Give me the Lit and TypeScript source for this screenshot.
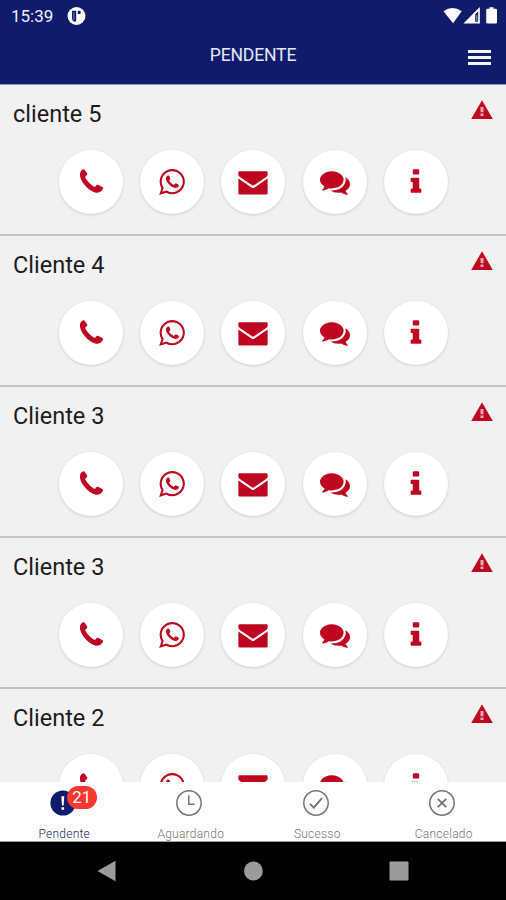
import { LitElement, html, css, svg } from "lit";
import { customElement, property } from "lit/decorators.js";

const ICONS: Record<string, string> = {
  phone:
    "M436 137Q500 130 540 200L665 395Q690 450 645 490L560 560Q540 590 560 640Q650 800 795 957Q940 1100 1085 1175Q1135 1195 1160 1160L1215 1085Q1250 1040 1310 1060L1570 1195Q1640 1235 1615 1290Q1580 1390 1500 1450Q1400 1550 1195 1535Q900 1480 640 1215Q300 870 239 538Q220 350 281 257Q340 165 436 137Z",
  whatsapp:
    "M1113 974q13 0 97.5 44t89.5 53q2 5 2 15 0 33-17 76-16 39-71 65.5t-102 26.5q-57 0-190-62-98-45-170-118t-148-185q-72-107-71-194v-8q3-91 74-158 24-22 52-22 6 0 18 1.5t19 1.5q19 0 26.5 6.5t15.5 27.5q8 20 33 88t25 75q0 21-34.5 57.5t-34.5 46.5q0 7 5 15 34 73 102 137 56 53 151 101 12 7 22 7 15 0 54-48.5t52-48.5zm-203 530q127 0 243.5-50t200.5-134 134-200.5 50-243.5-50-243.5-134-200.5-200.5-134-243.5-50-243.5 50-200.5 134-134 200.5-50 243.5q0 203 120 368l-79 233 242-77q158 104 345 104zm0-1382q153 0 292.5 60t240.5 161 161 240.5 60 292.5-60 292.5-161 240.5-240.5 161-292.5 60q-195 0-365-94l-417 134 136-405q-108-178-108-389 0-153 60-292.5t161-240.5 240.5-161 292.5-60z",
  mail:
    "M90 256H1702Q1770 256 1770 324V490Q1740 560 1660 612L960 1096Q896 1140 832 1096L132 612Q52 560 22 490V324Q22 256 90 256ZM22 690L810 1230Q896 1290 982 1230L1770 690V1570Q1770 1650 1690 1650H102Q22 1650 22 1570Z",
  chat:
    "M1408 768q0 139-94 257t-256.5 186.5-353.5 68.5q-86 0-176-16-124 88-278 128-36 9-86 16h-3q-11 0-20.5-8t-11.5-21q-1-3-1-6.5t.5-6.5 2-6l2.5-5 3.5-5.5 4-5 4.5-5 4-4.5q5-6 23-25t26-29.5 22.5-29 25-38.5 20.5-44q-124-72-195-177t-71-224q0-139 94-257t256.5-186.5 353.5-68.5 353.5 68.5 256.5 186.5 94 257zm384 256q0 120-71 224.5t-195 176.5q10 24 20.5 44t25 38.5 22.5 29 26 29.5 23 25q1 1 4 4.5t4.5 5 4 5 3.5 5.5l2.5 5 2 6 .5 6.5-1 6.5q-3 14-13 22t-22 7q-50-7-86-16-154-40-278-128-90 16-176 16-271 0-472-132 58 4 88 4 161 0 309-45t264-129q125-92 192-212t67-254q0-77-23-152 129 71 204 178t75 230z",
  info:
    "M1216 1344v128q0 26-19 45t-45 19h-512q-26 0-45-19t-19-45v-128q0-26 19-45t45-19h64v-384h-64q-26 0-45-19t-19-45v-128q0-26 19-45t45-19h384q26 0 45 19t19 45v576h64q26 0 45 19t19 45zm-128-1152v192q0 26-19 45t-45 19h-256q-26 0-45-19t-19-45v-192q0-26 19-45t45-19h256q26 0 45 19t19 45z",
};

@customElement("client-card")
export class ClientCard extends LitElement {
  @property() name = "";

  static styles = css`
    :host {
      display: block;
      flex: none;
      box-sizing: border-box;
      height: 151px;
      border-bottom: 2px solid #c4c4c4;
      background: #f1f1f1;
    }
    .head {
      display: flex;
      justify-content: space-between;
      align-items: flex-start;
      height: 64.5px;
      box-sizing: border-box;
      padding: 13px 12px 0 13px;
    }
    .name {
      font-size: 23.5px;
      line-height: 30px;
      padding-top: 1px;
      color: #1c1c1c;
    }
    .warn {
      width: 24px;
      height: 24px;
      display: block;
    }
    .actions {
      display: flex;
      justify-content: center;
      gap: 17.3px;
      padding-left: 0.8px;
    }
    .btn {
      width: 64px;
      height: 64px;
      border-radius: 50%;
      background: #fff;
      display: flex;
      align-items: center;
      justify-content: center;
      box-shadow: 0 1px 3px rgba(0, 0, 0, 0.15);
    }
    .icon {
      width: 30px;
      height: 30px;
      fill: #be0620;
    }
  `;

  render() {
    return html`
      <div class="head">
        <span class="name">${this.name}</span>
        <svg class="warn" viewBox="0 0 24 24">
          <path d="M12 2.2 22.8 20.9H1.2Z" fill="#be0a20" />
          <path d="M10.5 9h3v5.2h-3zM10.5 15.4h3v2.6h-3z" fill="#e9aab2" />
        </svg>
      </div>
      <div class="actions">
        ${Object.values(ICONS).map(
          (d) => html`<div class="btn">
            <svg class="icon" viewBox="0 0 1792 1792"><path d=${d} /></svg>
          </div>`
        )}
      </div>
    `;
  }
}

const TABS = [
  {
    label: "Pendente",
    active: true,
    badge: "21",
    icon: svg`<circle cx="14" cy="14" r="12.6" fill="#101c6b" /><path d="M12.4 7.2h2.8l-.5 9.2h-1.8zM12.5 18.2h2.6v2.6h-2.6z" fill="#fff" />`,
  },
  {
    label: "Aguardando",
    icon: svg`<circle class="line" cx="14" cy="14" r="12.2" /><path class="line" d="M13.8 6.2V15.2H19.6" />`,
  },
  {
    label: "Sucesso",
    icon: svg`<circle class="line" cx="14" cy="14" r="12.2" /><path class="line bold" d="M8 14.8 11.8 18.7 20 9.2" />`,
  },
  {
    label: "Cancelado",
    icon: svg`<circle class="line" cx="14" cy="14" r="12.2" /><path class="line bold" d="M9.8 9.8 18.2 18.2M18.2 9.8 9.8 18.2" />`,
  },
];

@customElement("app-root")
export class AppRoot extends LitElement {
  static styles = css`
    :host {
      display: flex;
      flex-direction: column;
      height: 900px;
      overflow: hidden;
      font-family: Roboto, "Liberation Sans", sans-serif;
      background: #f1f1f1;
    }
    .top {
      flex: none;
      height: 84px;
      background: #101c6b;
      color: #fff;
    }
    .status {
      display: flex;
      align-items: center;
      height: 32px;
      padding: 0 7px 0 11px;
    }
    .time {
      font-size: 17px;
      line-height: 32px;
      width: 55px;
      color: #eef0fa;
    }
    .app-dot {
      width: 20px;
      height: 20px;
    }
    .signals {
      margin-left: auto;
      width: 56px;
      height: 20px;
    }
    .bar {
      display: grid;
      grid-template-columns: 1fr auto 1fr;
      align-items: start;
      height: 52px;
      padding: 0 15px;
    }
    .title {
      grid-column: 2;
      font-size: 17.6px;
      letter-spacing: -0.2px;
      line-height: 24px;
      padding-top: 11px;
      color: #e6e8f4;
    }
    .menu {
      justify-self: end;
      display: flex;
      flex-direction: column;
      gap: 3.4px;
      width: 23px;
      padding-top: 17.5px;
    }
    .menu-line {
      height: 3px;
      background: #f4f5fb;
    }
    .list {
      flex: 1;
      min-height: 0;
      overflow: hidden;
      display: flex;
      flex-direction: column;
      border-top: 1px solid #9094b8;
    }
    .tabs {
      flex: none;
      box-sizing: border-box;
      height: 60px;
      display: grid;
      grid-template-columns: repeat(4, 1fr);
      background: #fff;
      border-bottom: 1px solid #9a9a9a;
    }
    .tab {
      display: flex;
      flex-direction: column;
      align-items: center;
      padding-top: 7px;
      color: #777;
    }
    .tab.active {
      color: #1c2570;
    }
    .glyph {
      position: relative;
      width: 28px;
      height: 28px;
      margin-right: 1px;
    }
    .glyph svg {
      display: block;
      width: 28px;
      height: 28px;
    }
    .line {
      fill: none;
      stroke: #757575;
      stroke-width: 1.5;
    }
    .line.bold {
      stroke-width: 1.9;
    }
    .badge {
      position: absolute;
      left: 18px;
      top: -3px;
      width: 30px;
      height: 23px;
      border-radius: 12px;
      background: #fb3830;
      color: #fff;
      font-size: 16.8px;
      line-height: 23px;
      text-align: center;
    }
    .label {
      font-size: 12px;
      font-weight: 300;
      line-height: 14px;
      padding: 10px 0 0 2px;
      letter-spacing: 0.25px;
    }
    .nav {
      flex: none;
      height: 58px;
      background: #000;
      display: flex;
      justify-content: center;
      align-items: center;
      gap: 126px;
      box-sizing: border-box;
    }
    .nav svg {
      width: 20px;
      height: 22px;
      fill: #9b9b9b;
    }
  `;

  render() {
    return html`
      <header class="top">
        <div class="status">
          <span class="time">15:39</span>
          <svg class="app-dot" viewBox="0 0 20 20">
            <circle cx="10.5" cy="10" r="9" fill="#fff" />
            <path d="M6 4.8h4.2v10.6H7.6Q6 14.4 6 12z" fill="#101c6b" />
            <path d="M7.3 6.2h1.1v7.6H7.3z" fill="#6b74a8" />
            <path d="M11.8 4.8h2.8v3.2h-2.8z" fill="#101c6b" />
          </svg>
          <svg class="signals" viewBox="0 0 56 20">
            <path d="M0.5 5.2Q9.5-1 18.8 5.2L10 17.2Z" fill="#fff" />
            <path d="M20.4 17.4 36.8 1V17.4Z" fill="#fff" />
            <path d="M32.2 8.2 35.2 5.2V15.8H32.2Z" fill="#101c6b" />
            <path d="M33.2 9h1.2v6h-1.2z" fill="#8a90bb" />
            <path d="M46.5 1.2h4v1.5h2.3q1.2 0 1.2 1.2v12.3q0 1.2-1.2 1.2h-8.4q-1.2 0-1.2-1.2V3.9q0-1.2 1.2-1.2h2.1z" fill="#fff" />
          </svg>
        </div>
        <div class="bar">
          <span></span>
          <span class="title">PENDENTE</span>
          <div class="menu">
            <div class="menu-line"></div>
            <div class="menu-line"></div>
            <div class="menu-line"></div>
          </div>
        </div>
      </header>
      <main class="list">
        ${["cliente 5", "Cliente 4", "Cliente 3", "Cliente 3", "Cliente 2"].map(
          (n) => html`<client-card name=${n}></client-card>`
        )}
      </main>
      <nav class="tabs">
        ${TABS.map(
          (t) => html`<div class="tab ${t.active ? "active" : ""}">
            <div class="glyph">
              <svg viewBox="0 0 28 28">${t.icon}</svg>
              ${t.badge ? html`<span class="badge">${t.badge}</span>` : ""}
            </div>
            <span class="label">${t.label}</span>
          </div>`
        )}
      </nav>
      <div class="nav">
        <svg viewBox="0 0 20 22"><path d="M.5 11 18.5 .8V21.2Z" /></svg>
        <svg viewBox="0 0 20 22"><circle cx="10.4" cy="11" r="9.4" /></svg>
        <svg viewBox="0 0 20 22"><rect x=".5" y="1.5" width="19" height="19" rx="1" /></svg>
      </div>
    `;
  }
}
